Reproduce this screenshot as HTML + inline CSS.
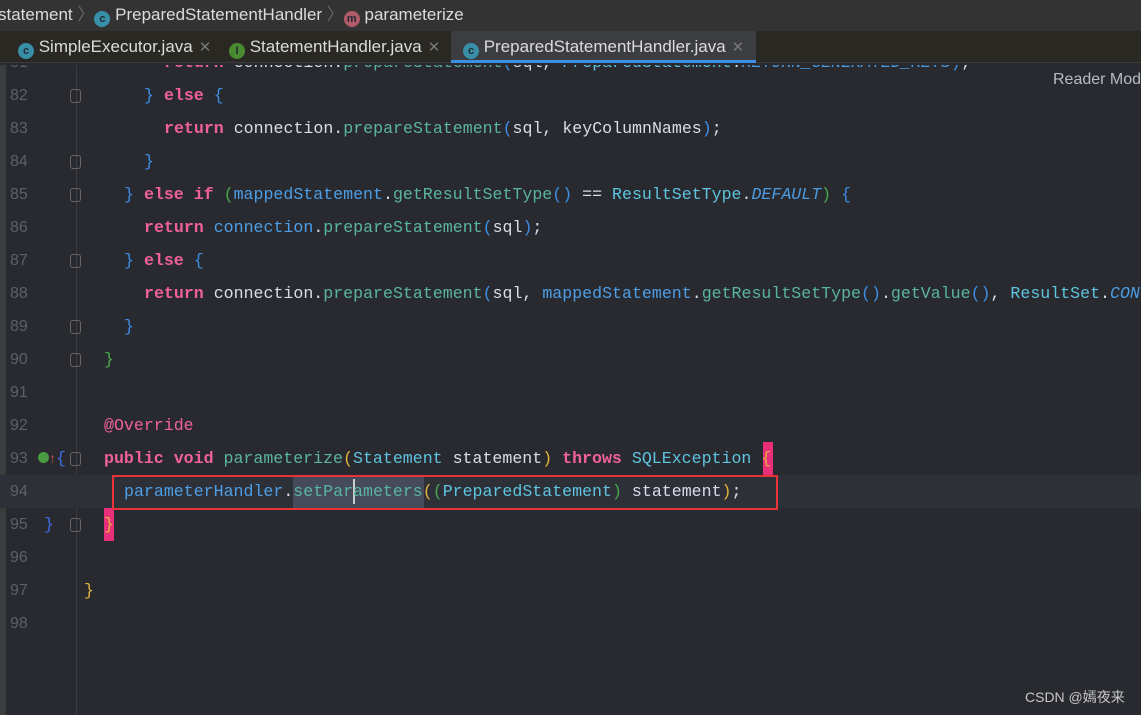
<!DOCTYPE html>
<html><head><meta charset="utf-8"><style>
*{margin:0;padding:0;box-sizing:border-box}
body{width:1141px;height:715px;overflow:hidden;background:#282a30;position:relative;font-family:"Liberation Sans",sans-serif}
.bc{position:absolute;left:0;top:0;width:1141px;height:31px;background:#333333;color:#dcdcdc;font-size:17px;line-height:30px;white-space:nowrap}
.tabs{position:absolute;left:0;top:31px;width:1141px;height:32px;background:#2a2823;border-bottom:1px solid #3a3a3a}
.tab{position:absolute;top:0;height:32px;color:#dcdcdc;font-size:17px;line-height:31px;white-space:nowrap}
.ic{display:inline-block;width:16px;height:16px;border-radius:50%;color:#1e2a30;font-size:11px;line-height:16px;text-align:center;vertical-align:-2px;font-weight:bold}
.x{color:#777;font-size:15px;margin-left:6px}
.ed{position:absolute;left:0;top:65px;width:1141px;height:650px;overflow:hidden}
.ln{position:absolute;height:33px;line-height:33px;font-family:"Liberation Mono",monospace;font-size:16.6px;white-space:pre;color:#d8dee9}
.num{position:absolute;left:10px;width:24px;color:#5d6068;font-family:"Liberation Sans",sans-serif;font-size:16px;height:33px;line-height:33px}
.k{color:#f0619b;font-weight:bold}.m{color:#5ab5a0}.f{color:#4d9ee6}.c{color:#5ec4df}.b{color:#3d8fe6}.g{color:#49a84c}.y{color:#e3b23c}.i{font-style:italic;color:#4a9be0}
.fold{position:absolute;left:70px;width:11px;height:14px;border:1px solid #666;border-radius:3px}
</style></head><body>
<div class="bc"><span style="margin-left:-2px">statement</span> <span style="color:#666">〉</span><span class="ic" style="background:#3a8fa8">c</span> PreparedStatementHandler <span style="color:#666">〉</span><span class="ic" style="background:#b05a6a">m</span> parameterize</div>
<div class="ed">
<div style="position:absolute;left:0;top:0;width:6px;height:651px;background:#3a3c3e"></div>
<div style="position:absolute;left:76px;top:0;width:1px;height:651px;background:#3b3d42"></div>
<div style="position:absolute;left:0;top:410px;width:1141px;height:33px;background:#2e3038"></div>
<div style="position:absolute;left:293px;top:410px;width:131px;height:33px;background:#454b5a"></div>
<div style="position:absolute;left:763px;top:377px;width:10px;height:33px;background:#e8307a"></div>
<div style="position:absolute;left:104px;top:443px;width:10px;height:33px;background:#e8307a"></div>
<div style="position:absolute;left:112px;top:410px;width:666px;height:35px;border:2px solid #e8333a"></div>
<div style="position:absolute;left:353px;top:414px;width:2px;height:25px;background:#ccc"></div>

<div class="num" style="top:-19px">81</div><div class="ln" style="left:164px;top:-19px"><span class="k">return</span> connection.<span class="m">prepareStatement</span><span class="b">(</span>sql, <span class="c">PreparedStatement</span>.<span class="i">RETURN_GENERATED_KEYS</span><span class="b">)</span>;</div>
<div class="num" style="top:14px">82</div><div class="fold" style="top:24px"></div><div class="ln" style="left:144px;top:14px"><span class="b">}</span> <span class="k">else</span> <span class="b">{</span></div>
<div class="num" style="top:47px">83</div><div class="ln" style="left:164px;top:47px"><span class="k">return</span> connection.<span class="m">prepareStatement</span><span class="b">(</span>sql, keyColumnNames<span class="b">)</span>;</div>
<div class="num" style="top:80px">84</div><div class="fold" style="top:90px"></div><div class="ln" style="left:144px;top:80px"><span class="b">}</span></div>
<div class="num" style="top:113px">85</div><div class="fold" style="top:123px"></div><div class="ln" style="left:124px;top:113px"><span class="b">}</span> <span class="k">else if</span> <span class="g">(</span><span class="f">mappedStatement</span>.<span class="m">getResultSetType</span><span class="b">()</span> == <span class="c">ResultSetType</span>.<span class="i">DEFAULT</span><span class="g">)</span> <span class="b">{</span></div>
<div class="num" style="top:146px">86</div><div class="ln" style="left:144px;top:146px"><span class="k">return</span> <span class="f">connection</span>.<span class="m">prepareStatement</span><span class="b">(</span>sql<span class="b">)</span>;</div>
<div class="num" style="top:179px">87</div><div class="fold" style="top:189px"></div><div class="ln" style="left:124px;top:179px"><span class="b">}</span> <span class="k">else</span> <span class="b">{</span></div>
<div class="num" style="top:212px">88</div><div class="ln" style="left:144px;top:212px"><span class="k">return</span> connection.<span class="m">prepareStatement</span><span class="b">(</span>sql, <span class="f">mappedStatement</span>.<span class="m">getResultSetType</span><span class="b">()</span>.<span class="m">getValue</span><span class="b">()</span>, <span class="c">ResultSet</span>.<span class="i">CONCUR_READ_ONLY</span></div>
<div class="num" style="top:245px">89</div><div class="fold" style="top:255px"></div><div class="ln" style="left:124px;top:245px"><span class="b">}</span></div>
<div class="num" style="top:278px">90</div><div class="fold" style="top:288px"></div><div class="ln" style="left:104px;top:278px"><span class="g">}</span></div>
<div class="num" style="top:311px">91</div>
<div class="num" style="top:344px">92</div><div class="ln" style="left:104px;top:344px"><span class="k" style="font-weight:normal">@Override</span></div>
<div class="num" style="top:377px">93</div><div style="position:absolute;left:38px;top:387px;width:11px;height:11px;border-radius:50%;background:#4a9a40"></div><div style="position:absolute;left:49px;top:377px;line-height:33px;color:#c05050;font-size:14px">↑</div><div class="ln" style="left:56px;top:377px;color:#3d6fe6">{</div><div class="fold" style="top:387px"></div><div class="ln" style="left:104px;top:377px"><span class="k">public void</span> <span class="m">parameterize</span><span class="y">(</span><span class="c">Statement</span> statement<span class="y">)</span> <span class="k">throws</span> <span class="c">SQLException</span> <span class="y">{</span></div>
<div class="num" style="top:410px">94</div><div class="ln" style="left:124px;top:410px"><span class="f">parameterHandler</span>.<span class="m">setParameters</span><span class="y">(</span><span class="g">(</span><span class="c">PreparedStatement</span><span class="g">)</span> statement<span class="y">)</span>;</div>
<div class="num" style="top:443px">95</div><div class="ln" style="left:44px;top:443px;color:#3d6fe6">}</div><div class="fold" style="top:453px"></div><div class="ln" style="left:104px;top:443px"><span class="y">}</span></div>
<div class="num" style="top:476px">96</div>
<div class="num" style="top:509px">97</div><div class="ln" style="left:84px;top:509px"><span class="y">}</span></div>
<div class="num" style="top:542px">98</div>
<div style="position:absolute;left:1053px;top:6px;color:#b8bcc0;font-size:16px;white-space:nowrap">Reader Mode</div>
<div style="position:absolute;left:1025px;top:622px;color:#c8c8c8;font-size:14px;font-family:'Liberation Sans','Noto Sans CJK SC',sans-serif">CSDN @嫣夜来</div>
</div>
<div class="tabs">
<div class="tab" style="left:18px"><span class="ic" style="background:#3a8fa8">c</span> SimpleExecutor.java<span class="x">✕</span></div>
<div class="tab" style="left:229px"><span class="ic" style="background:#4a8a30">I</span> StatementHandler.java<span class="x">✕</span></div>
<div class="tab" style="left:451px;width:305px;background:#3b3d40;padding-left:12px;border-bottom:3px solid #3d8fe6"><span class="ic" style="background:#3a8fa8">c</span> PreparedStatementHandler.java<span class="x">✕</span></div>
</div>
</body></html>
